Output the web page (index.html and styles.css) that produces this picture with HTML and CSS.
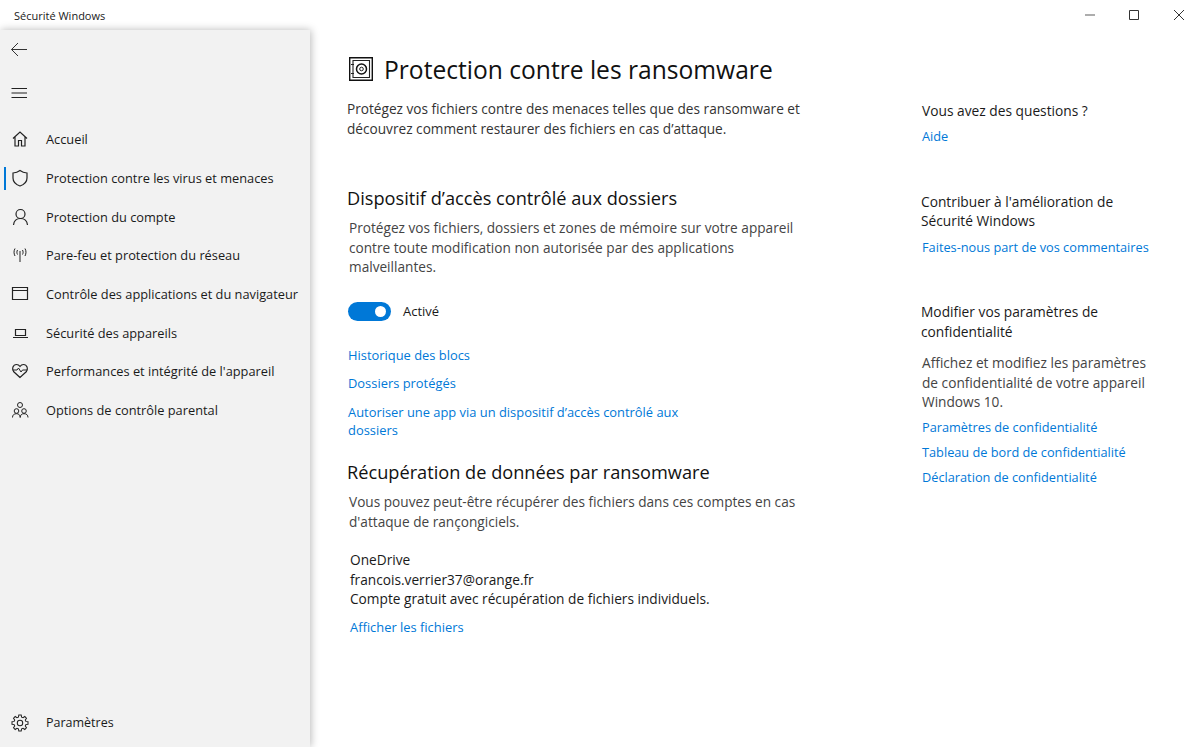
FILE: index.html
```html
<!DOCTYPE html>
<html>
 <head>
 <meta charset="UTF-8">
 <title>Sécurité Windows</title>
 <link rel="stylesheet" href="styles.css">
 </head>
 <body>

  <div class="titlebar">
   <span class="app_name">Sécurité Windows</span>
   <div class="win_buttons">
    <svg class="win_btn" width="46" height="30" viewBox="0 0 46 30"><path d="M19 15h10" stroke="#777" stroke-width="1.200" fill="none"/></svg>
    <svg class="win_btn" width="44" height="30" viewBox="0 0 44 30"><path d="M17.500 10.500h9v9h-9z" stroke="#333" fill="none"/></svg>
    <svg class="win_btn" width="44" height="30" viewBox="0 0 44 30"><path d="M18 10l10 10M28 10L18 20" stroke="#333" fill="none"/></svg>
   </div>
  </div>

  <div class="window">
   <div class="sidebar">
    <div class="side_top">
     <svg class="icon" width="20" height="20" viewBox="0 0 20 20"><path d="M2.500 9.500h15.500M9 3L2.500 9.500 9 16" stroke="#333" fill="none"/></svg>
    </div>
    <div class="side_menu">
     <svg class="icon" width="20" height="20" viewBox="0 0 20 20"><path d="M2.500 5.500H18M2.500 10H18M2.500 14.500H18" stroke="#222" fill="none"/></svg>
    </div>

    <div class="nav">
     <div class="nav_item">
      <svg class="icon" width="20" height="20" viewBox="0 0 20 20"><path d="M3 9.500L10 3l7 6.500M5 8v9h3.500v-5.500h3V17H15V8" stroke="#222" stroke-width="1.200" fill="none"/></svg>
      <span>Accueil</span>
     </div>
     <div class="nav_item current">
      <svg class="icon" width="20" height="20" viewBox="0 0 20 20"><path d="M10 2.500c2 1.500 4 2.300 7 2.500v5c0 4-2.500 6.500-7 8-4.500-1.500-7-4-7-8V5c3-.2 5-1 7-2.500z" stroke="#222" stroke-width="1.200" fill="none"/></svg>
      <span>Protection contre les virus et menaces</span>
     </div>
     <div class="nav_item">
      <svg class="icon" width="20" height="20" viewBox="0 0 20 20"><circle cx="10.500" cy="7" r="4.500" stroke="#222" stroke-width="1.200" fill="none"/><path d="M3.500 18c.5-4.500 3-6.500 7-6.500s6.500 2 7 6.500" stroke="#222" stroke-width="1.200" fill="none"/></svg>
      <span>Protection du compte</span>
     </div>
     <div class="nav_item">
      <svg class="icon" width="20" height="20" viewBox="0 0 20 20"><path d="M10 6v11" stroke="#222" fill="none"/><path d="M7.500 5c-.8 1.500-.8 3 0 4.500M12.500 5c.8 1.500.8 3 0 4.500M5 3.500c-1.300 2.300-1.300 5.200 0 7.500M15 3.500c1.300 2.300 1.300 5.200 0 7.500" stroke="#222" fill="none"/></svg>
      <span>Pare-feu et protection du réseau</span>
     </div>
     <div class="nav_item">
      <svg class="icon" width="20" height="20" viewBox="0 0 20 20"><path d="M2.500 3.500h15v12h-15zM2.500 6.500h15" stroke="#222" stroke-width="1.200" fill="none"/></svg>
      <span>Contrôle des applications et du navigateur</span>
     </div>
     <div class="nav_item">
      <svg class="icon" width="20" height="20" viewBox="0 0 20 20"><path d="M5.500 6.500h10v6h-10zM3 14.500h15" stroke="#222" stroke-width="1.200" fill="none"/></svg>
      <span>Sécurité des appareils</span>
     </div>
     <div class="nav_item">
      <svg class="icon" width="20" height="20" viewBox="0 0 20 20"><path d="M10 16.500L3.500 10.500C1.500 8 3 3.500 6.500 3.500 8 3.500 9.200 4.300 10 5.500c.8-1.200 2-2 3.500-2 3.500 0 5 4.500 3 7z" stroke="#222" stroke-width="1.200" fill="none"/><path d="M2.500 9h4.500l1.500-2 2.500 4 1.500-2h5" stroke="#222" fill="none"/></svg>
      <span>Performances et intégrité de l'appareil</span>
     </div>
     <div class="nav_item">
      <svg class="icon" width="20" height="20" viewBox="0 0 20 20"><circle cx="10" cy="5" r="2.500" stroke="#222" fill="none"/><circle cx="6.500" cy="11" r="2.300" stroke="#222" fill="none"/><circle cx="14" cy="11" r="2.300" stroke="#222" fill="none"/><path d="M2.500 17.500c0-2.500 1.500-3.800 4-3.800s3.500 1.300 3.700 3.800c.2-2.500 1.300-3.800 3.800-3.800s4 1.300 4 3.800" stroke="#222" fill="none"/></svg>
      <span>Options de contrôle parental</span>
     </div>
    </div>

    <div class="nav_item settings">
     <svg class="icon" width="20" height="20" viewBox="0 0 20 20"><g transform="translate(2 2) scale(.8)"><circle cx="10" cy="10" r="3.400" stroke="#222" stroke-width="1.300" fill="none"/><path d="M8.500 0h3l.5 2.700 1.800.7 2.200-1.500 2.100 2.100-1.500 2.200.7 1.800 2.700.5v3l-2.700.5-.7 1.800 1.500 2.200-2.100 2.100-2.200-1.500-1.800.7-.5 2.700h-3l-.5-2.700-1.800-.7-2.200 1.500-2.100-2.100 1.500-2.200-.7-1.800L0 11.500v-3l2.700-.5.700-1.800L1.900 4 4 1.900l2.200 1.500 1.800-.7z" stroke="#222" stroke-width="1.300" fill="none"/></g></svg>
     <span>Paramètres</span>
    </div>
   </div>

   <div class="content">
    <div class="main_col">
     <div class="page_head">
      <svg width="24" height="24" viewBox="0 0 24 24"><path d="M.7.700h22.600v22.600H.7z" stroke="#111" stroke-width="1.400" fill="none"/><path d="M4 3.500h16.500v17H4zM2 7.500h3M2 16.500h3" stroke="#222" stroke-width="1.100" fill="none"/><circle cx="12.500" cy="12" r="5" stroke="#111" stroke-width="1.500" fill="none"/><circle cx="12.500" cy="12" r="1.800" stroke="#222" fill="none"/></svg>
      <h1>Protection contre les ransomware</h1>
     </div>
     <p class="intro">Protégez vos fichiers contre des menaces telles que des ransomware et<br>découvrez comment restaurer des fichiers en cas d’attaque.</p>

     <h2 class="first">Dispositif d’accès contrôlé aux dossiers</h2>
     <p class="desc">Protégez vos fichiers, dossiers et zones de mémoire sur votre appareil<br>contre toute modification non autorisée par des applications<br>malveillantes.</p>

     <div class="toggle_row">
      <div class="toggle"><div class="knob"></div></div>
      <span>Activé</span>
     </div>

     <div class="links">
      <a href="#">Historique des blocs</a>
      <a href="#">Dossiers protégés</a>
      <a href="#">Autoriser une app via un dispositif d’accès contrôlé aux<br>dossiers</a>
     </div>

     <h2 class="second">Récupération de données par ransomware</h2>
     <p class="desc">Vous pouvez peut-être récupérer des fichiers dans ces comptes en cas<br>d'attaque de rançongiciels.</p>

     <div class="account">
      OneDrive<br>
      francois.verrier37@orange.fr<br>
      Compte gratuit avec récupération de fichiers individuels.
     </div>
     <a class="show_files" href="#">Afficher les fichiers</a>
    </div>

    <div class="right_col">
     <div class="aside q">
      <div class="aside_head">Vous avez des questions ?</div>
      <a href="#">Aide</a>
     </div>
     <div class="aside c">
      <div class="aside_head">Contribuer à l'amélioration de<br>Sécurité Windows</div>
      <a href="#">Faites-nous part de vos commentaires</a>
     </div>
     <div class="aside m">
      <div class="aside_head">Modifier vos paramètres de<br>confidentialité</div>
      <p>Affichez et modifiez les paramètres<br>de confidentialité de votre appareil<br>Windows 10.</p>
      <a href="#">Paramètres de confidentialité</a>
      <a href="#">Tableau de bord de confidentialité</a>
      <a href="#">Déclaration de confidentialité</a>
     </div>
    </div>
   </div>
  </div>

 </body>
</html>
```

FILE: styles.css
```css
html, body { margin: 0; padding: 0; height: 100%; }
body    { background-color: #FFF; color: #1A1A1A; overflow: hidden;
          font-family: "Open Sans", "Noto Sans", sans-serif; font-size: 13px;
          display: flex; flex-direction: column; }
a       { color: #0078D7; text-decoration: none; display: block; }
p       { margin: 0; }
svg     { display: block; flex: none; }

.titlebar   { height: 30px; display: flex; align-items: center; justify-content: space-between; flex: none; }
.app_name   { margin-left: 14px; font-size: 11px; }
.win_buttons { display: flex; }

.window     { flex: 1; display: flex; min-height: 0; }

/* left navigation pane */
.sidebar    { width: 310px; flex: none; background-color: #F2F2F2; display: flex; flex-direction: column;
              box-shadow: 1px 0 8px rgba(0,0,0,.28); }
.side_top   { height: 39px; display: flex; align-items: center; padding-left: 9px; }
.side_menu  { height: 39px; margin-top: 4px; display: flex; align-items: center; padding-left: 9px; }
.nav        { margin-top: 8px; flex: 1; }
.nav_item   { height: 38.700px; display: flex; align-items: center; gap: 16px; padding-left: 10px; position: relative;
              font-size: 12.800px; }
.current::before { content: ""; position: absolute; left: 4px; top: 8px; width: 2px; height: 23px; background-color: #0078D7; }
.settings   { margin-bottom: 5px; font-size: 12.500px; }

/* page content */
.content    { flex: 1; display: flex; min-width: 0; }
.main_col   { width: 538px; margin-left: 37px; flex: none; }
.right_col  { flex: 1; }

.page_head  { display: flex; align-items: center; gap: 11px; margin: 23px 0 0 2px; height: 32px; }
h1          { font-size: 24.600px; font-weight: 400; margin: 0; color: #111; }
.intro      { margin-top: 14px; line-height: 19.500px; color: #333; font-size: 13.650px; }
h2          { font-size: 18.200px; font-weight: 400; margin: 0; color: #111; line-height: 24px; }
h2.first    { margin-top: 48px; }
h2.second   { margin-top: 21.500px; }
.desc       { margin: 8px 0 0 2px; line-height: 19.500px; color: #444; font-size: 13.650px; }

.toggle_row { display: flex; align-items: center; gap: 12px; margin: 25px 0 0 1px; }
.toggle     { width: 43px; height: 19px; border-radius: 10px; background-color: #0078D7; position: relative; }
.knob       { position: absolute; right: 5px; top: 4px; width: 11px; height: 11px; border-radius: 50%; background-color: #FFF; }

.links      { margin: 25px 0 0 1px; font-size: 12.900px; }
.links a    { line-height: 18px; margin-bottom: 10.500px; }
.account    { margin: 19px 0 0 3px; line-height: 19.500px; font-size: 13.700px; }
.show_files { margin: 8px 0 0 3px; line-height: 20px; font-size: 12.900px; }

.aside_head { font-size: 13.750px; line-height: 19.500px; color: #1A1A1A; }
.aside a    { line-height: 25.300px; font-size: 12.750px; }
.q          { margin: 71px 0 0 37px; }
.q a        { margin-top: 3px; }
.c          { margin: 43px 0 0 36px; }
.c a        { margin: 4px 0 0 1px; }
.m          { margin: 42px 0 0 36px; }
.m p        { margin: 12px 0 3px 1px; line-height: 19.500px; color: #444; font-size: 13.700px; }
.m a        { margin-left: 1px; }
```
